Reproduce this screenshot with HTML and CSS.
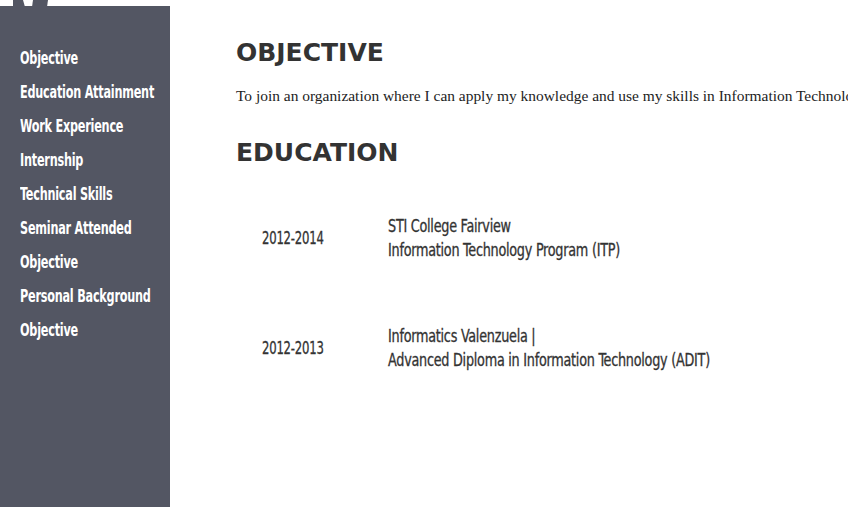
FILE: index.html
```html
<!DOCTYPE html>
<html>
<head>
<meta charset="utf-8">
<link rel="stylesheet" href="styles.css">
</head>
<body>
<div class="page">
  <aside class="sidebar">
    <svg class="logo-tail" width="40" height="7" viewBox="0 0 40 7"><polygon points="0,0 10,0 12,7 0,7" fill="#535663"/><polygon points="20,0 35,0 34,7 19,7" fill="#535663"/></svg>
    <nav class="nav">
      <a class="nav-link">Objective</a>
      <a class="nav-link">Education Attainment</a>
      <a class="nav-link">Work Experience</a>
      <a class="nav-link">Internship</a>
      <a class="nav-link">Technical Skills</a>
      <a class="nav-link">Seminar Attended</a>
      <a class="nav-link">Objective</a>
      <a class="nav-link">Personal Background</a>
      <a class="nav-link">Objective</a>
    </nav>
  </aside>
  <main class="content">
    <h2 class="section-title first">OBJECTIVE</h2>
    <p class="objective">To join an organization where I can apply my knowledge and use my skills in Information Technology and contribute to the growth of the company.</p>
    <h2 class="section-title">EDUCATION</h2>
    <div class="edu-list">
      <div class="edu-row">
        <div class="edu-year"><span class="cond year">2012-2014</span></div>
        <div class="edu-detail"><span class="cond detail">STI College Fairview<br>Information Technology Program (ITP)</span></div>
      </div>
      <div class="edu-row">
        <div class="edu-year"><span class="cond year">2012-2013</span></div>
        <div class="edu-detail"><span class="cond detail">Informatics Valenzuela |<br>Advanced Diploma in Information Technology (ADIT)</span></div>
      </div>
    </div>
  </main>
</div>
</body>
</html>
```

FILE: styles.css
```css
html, body {
  margin: 0;
  padding: 0;
  background: #ffffff;
  overflow: hidden;
}
.page {
  display: flex;
  width: 848px;
  height: 507px;
}
.sidebar {
  position: relative;
  flex: 0 0 170px;
  width: 170px;
  min-width: 0;
  margin-top: 6px;
  background: #535663;
}
.logo-tail {
  position: absolute;
  left: 13px;
  top: -6px;
  display: block;
}
.nav {
  display: flex;
  flex-direction: column;
  align-items: flex-start;
  padding: 35px 0 0 20px;
}
.nav-link {
  display: inline-block;
  height: 34px;
  line-height: 34px;
  font-family: "DejaVu Sans Condensed", "DejaVu Sans", sans-serif;
  font-stretch: condensed;
  font-weight: bold;
  font-size: 17px;
  color: #ffffff;
  letter-spacing: -0.3px;
  transform: scaleX(0.735);
  transform-origin: left center;
  white-space: nowrap;
}
.content {
  flex: 1 1 auto;
  padding-left: 66px;
  min-width: 0;
  overflow: hidden;
}
.section-title {
  margin: 0;
  font-family: "DejaVu Sans", Verdana, sans-serif;
  font-weight: bold;
  font-size: 25px;
  line-height: 30px;
  color: #333333;
}
.section-title.first {
  margin-top: 38px;
}
.objective {
  margin: 18px 0 32px;
  font-family: "Liberation Serif", "Times New Roman", serif;
  font-size: 15.45px;
  line-height: 20px;
  color: #222222;
  white-space: nowrap;
}
.edu-list {
  display: flex;
  flex-direction: column;
  gap: 62px;
  margin-top: 46px;
}
.edu-row {
  display: flex;
  align-items: center;
  padding-left: 26px;
  height: 48px;
}
.edu-year {
  flex: 0 0 126px;
}
.edu-detail {
  flex: 1 1 auto;
}
.cond {
  display: inline-block;
  font-family: "DejaVu Sans Condensed", "DejaVu Sans", sans-serif;
  font-stretch: condensed;
  font-size: 17px;
  line-height: 24px;
  color: #333333;
  letter-spacing: -0.3px;
  -webkit-text-stroke: 0.3px #333333;
  transform-origin: left center;
  white-space: nowrap;
}
.cond.detail {
  transform: scaleX(0.837);
}
.cond.year {
  font-size: 18px;
  transform: scaleX(0.72);
}
```
